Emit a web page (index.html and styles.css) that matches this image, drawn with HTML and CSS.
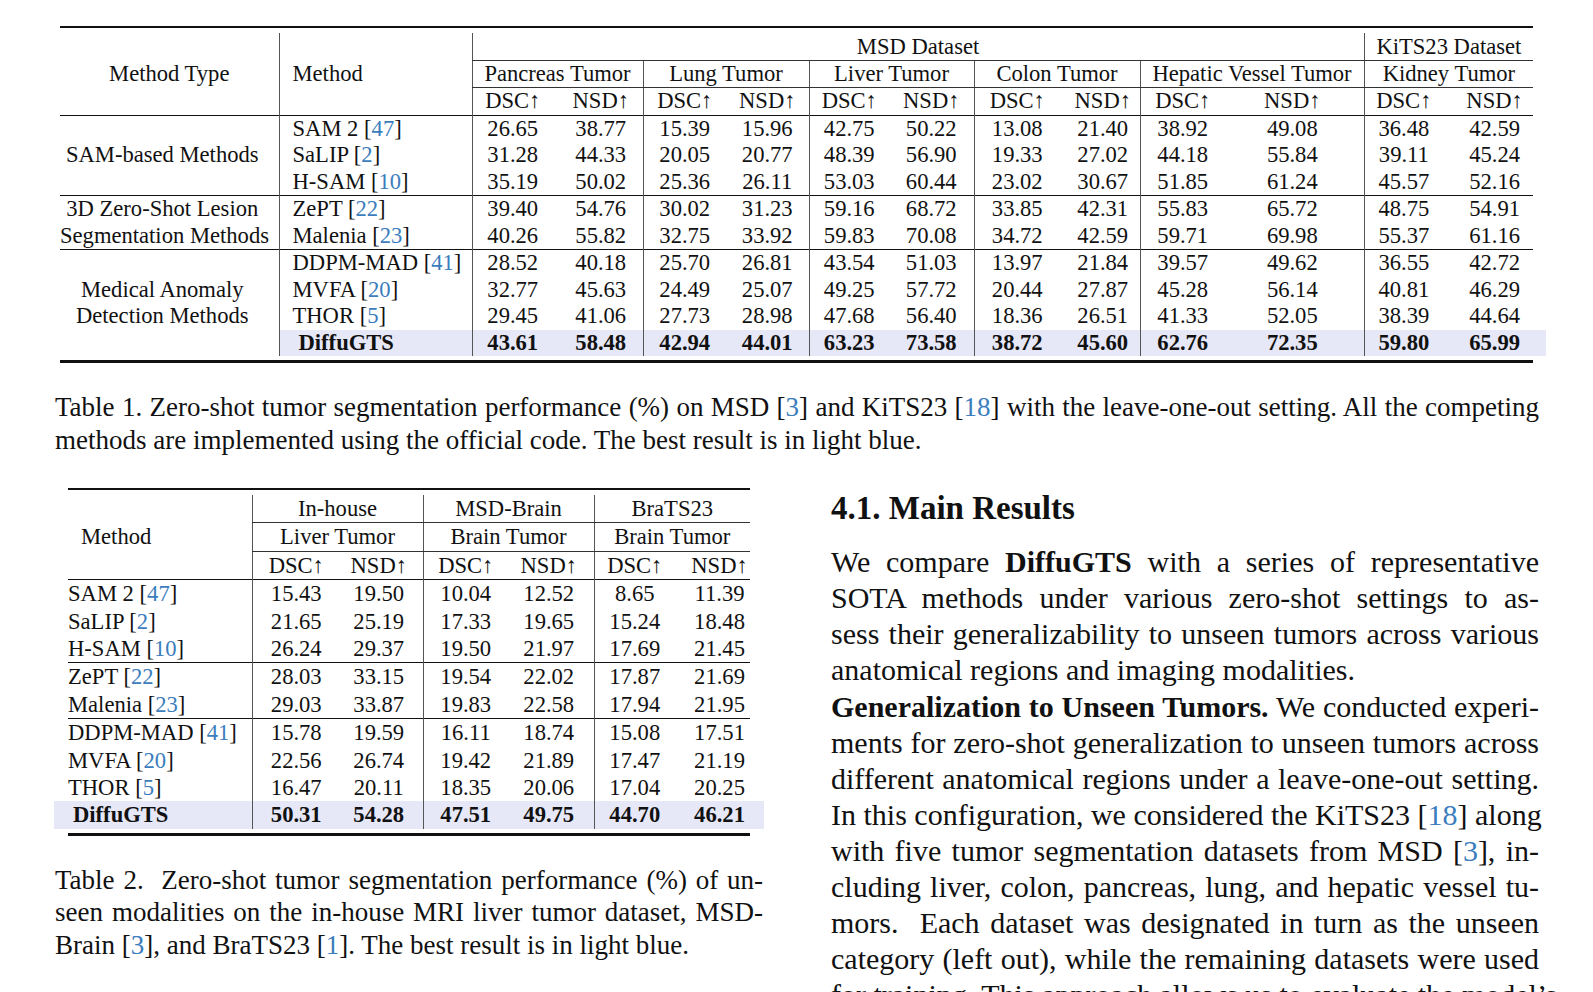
FILE: index.html
```html
<!DOCTYPE html>
<html>
<head>
<meta charset="utf-8">
<link rel="stylesheet" href="styles.css">
</head>
<body>
<div class="page">
  <div class="t1wrap">
    <table class="tab tab1">
      <colgroup>
        <col class="w219"><col class="w193">
        <col class="w81"><col class="w90">
        <col class="w83"><col class="w83">
        <col class="w80"><col class="w85">
        <col class="w86"><col class="w80">
        <col class="w85"><col class="w139">
        <col class="w79"><col class="w90">
      </colgroup>
      <thead>
        <tr class="top">
          <th rowspan="3" class="mth">Method Type</th>
          <th rowspan="3" class="meth vl">Method</th>
          <th colspan="10" class="vl cm">MSD Dataset</th>
          <th colspan="2" class="vl cm">KiTS23 Dataset</th>
        </tr>
        <tr>
          <th colspan="2" class="vl cm">Pancreas Tumor</th>
          <th colspan="2" class="vl cm">Lung Tumor</th>
          <th colspan="2" class="vl cm">Liver Tumor</th>
          <th colspan="2" class="vl cm">Colon Tumor</th>
          <th colspan="2" class="vl cm">Hepatic Vessel Tumor</th>
          <th colspan="2" class="vl cm">Kidney Tumor</th>
        </tr>
        <tr class="sub">
          <th>DSC↑</th><th>NSD↑</th><th>DSC↑</th><th>NSD↑</th><th>DSC↑</th><th>NSD↑</th>
          <th>DSC↑</th><th>NSD↑</th><th>DSC↑</th><th>NSD↑</th><th>DSC↑</th><th>NSD↑</th>
        </tr>
      </thead>
      <tbody>
        <tr class="gs">
          <td rowspan="3" class="mt">SAM-based Methods</td>
          <td class="meth">SAM 2 [<span class="ref">47</span>]</td>
          <td>26.65</td><td>38.77</td><td>15.39</td><td>15.96</td><td>42.75</td><td>50.22</td><td>13.08</td><td>21.40</td><td>38.92</td><td>49.08</td><td>36.48</td><td>42.59</td>
        </tr>
        <tr>
          <td class="meth">SaLIP [<span class="ref">2</span>]</td>
          <td>31.28</td><td>44.33</td><td>20.05</td><td>20.77</td><td>48.39</td><td>56.90</td><td>19.33</td><td>27.02</td><td>44.18</td><td>55.84</td><td>39.11</td><td>45.24</td>
        </tr>
        <tr>
          <td class="meth">H-SAM [<span class="ref">10</span>]</td>
          <td>35.19</td><td>50.02</td><td>25.36</td><td>26.11</td><td>53.03</td><td>60.44</td><td>23.02</td><td>30.67</td><td>51.85</td><td>61.24</td><td>45.57</td><td>52.16</td>
        </tr>
        <tr class="gs">
          <td rowspan="2" class="mt">3D Zero-Shot Lesion<br>Segmentation Methods</td>
          <td class="meth">ZePT [<span class="ref">22</span>]</td>
          <td>39.40</td><td>54.76</td><td>30.02</td><td>31.23</td><td>59.16</td><td>68.72</td><td>33.85</td><td>42.31</td><td>55.83</td><td>65.72</td><td>48.75</td><td>54.91</td>
        </tr>
        <tr>
          <td class="meth">Malenia [<span class="ref">23</span>]</td>
          <td>40.26</td><td>55.82</td><td>32.75</td><td>33.92</td><td>59.83</td><td>70.08</td><td>34.72</td><td>42.59</td><td>59.71</td><td>69.98</td><td>55.37</td><td>61.16</td>
        </tr>
        <tr class="gs">
          <td rowspan="4" class="mt">Medical Anomaly<br>Detection Methods</td>
          <td class="meth">DDPM-MAD [<span class="ref">41</span>]</td>
          <td>28.52</td><td>40.18</td><td>25.70</td><td>26.81</td><td>43.54</td><td>51.03</td><td>13.97</td><td>21.84</td><td>39.57</td><td>49.62</td><td>36.55</td><td>42.72</td>
        </tr>
        <tr>
          <td class="meth">MVFA [<span class="ref">20</span>]</td>
          <td>32.77</td><td>45.63</td><td>24.49</td><td>25.07</td><td>49.25</td><td>57.72</td><td>20.44</td><td>27.87</td><td>45.28</td><td>56.14</td><td>40.81</td><td>46.29</td>
        </tr>
        <tr>
          <td class="meth">THOR [<span class="ref">5</span>]</td>
          <td>29.45</td><td>41.06</td><td>27.73</td><td>28.98</td><td>47.68</td><td>56.40</td><td>18.36</td><td>26.51</td><td>41.33</td><td>52.05</td><td>38.39</td><td>44.64</td>
        </tr>
        <tr class="best">
          <td class="meth"><span class="bm">DiffuGTS</span></td>
          <td>43.61</td><td>58.48</td><td>42.94</td><td>44.01</td><td>63.23</td><td>73.58</td><td>38.72</td><td>45.60</td><td>62.76</td><td>72.35</td><td>59.80</td><td>65.99</td>
        </tr>
      </tbody>
    </table>
  </div>

  <p class="cap cap1">
    <span class="ln">Table 1. Zero-shot tumor segmentation performance (%) on MSD [<span class="ref">3</span>] and KiTS23 [<span class="ref">18</span>] with the leave-one-out setting. All the competing</span>
    <span class="ln last">methods are implemented using the official code. The best result is in light blue.</span>
  </p>

  <div class="cols">
    <div class="col left">
      <div class="t2wrap">
        <table class="tab tab2">
          <colgroup>
            <col class="w184"><col class="w88"><col class="w83"><col class="w85"><col class="w86"><col class="w81"><col class="w75">
          </colgroup>
          <thead>
            <tr>
              <th rowspan="3" class="mh2">Method</th>
              <th colspan="2" class="vl cm">In-house</th>
              <th colspan="2" class="vl cm">MSD-Brain</th>
              <th colspan="2" class="vl cm">BraTS23</th>
            </tr>
            <tr>
              <th colspan="2" class="vl cm">Liver Tumor</th>
              <th colspan="2" class="vl cm">Brain Tumor</th>
              <th colspan="2" class="vl cm">Brain Tumor</th>
            </tr>
            <tr class="sub">
              <th>DSC↑</th><th>NSD↑</th><th>DSC↑</th><th>NSD↑</th><th>DSC↑</th><th>NSD↑</th>
            </tr>
          </thead>
          <tbody>
            <tr class="gs"><td class="m2">SAM 2 [<span class="ref">47</span>]</td><td>15.43</td><td>19.50</td><td>10.04</td><td>12.52</td><td>8.65</td><td>11.39</td></tr>
            <tr><td class="m2">SaLIP [<span class="ref">2</span>]</td><td>21.65</td><td>25.19</td><td>17.33</td><td>19.65</td><td>15.24</td><td>18.48</td></tr>
            <tr><td class="m2">H-SAM [<span class="ref">10</span>]</td><td>26.24</td><td>29.37</td><td>19.50</td><td>21.97</td><td>17.69</td><td>21.45</td></tr>
            <tr class="gs"><td class="m2">ZePT [<span class="ref">22</span>]</td><td>28.03</td><td>33.15</td><td>19.54</td><td>22.02</td><td>17.87</td><td>21.69</td></tr>
            <tr><td class="m2">Malenia [<span class="ref">23</span>]</td><td>29.03</td><td>33.87</td><td>19.83</td><td>22.58</td><td>17.94</td><td>21.95</td></tr>
            <tr class="gs"><td class="m2">DDPM-MAD [<span class="ref">41</span>]</td><td>15.78</td><td>19.59</td><td>16.11</td><td>18.74</td><td>15.08</td><td>17.51</td></tr>
            <tr><td class="m2">MVFA [<span class="ref">20</span>]</td><td>22.56</td><td>26.74</td><td>19.42</td><td>21.89</td><td>17.47</td><td>21.19</td></tr>
            <tr><td class="m2">THOR [<span class="ref">5</span>]</td><td>16.47</td><td>20.11</td><td>18.35</td><td>20.06</td><td>17.04</td><td>20.25</td></tr>
            <tr class="best"><td class="m2"><span class="bm">DiffuGTS</span></td><td>50.31</td><td>54.28</td><td>47.51</td><td>49.75</td><td>44.70</td><td>46.21</td></tr>
          </tbody>
        </table>
      </div>
      <p class="cap cap2">
        <span class="ln">Table 2.&nbsp; Zero-shot tumor segmentation performance (%) of un-</span>
        <span class="ln">seen modalities on the in-house MRI liver tumor dataset, MSD-</span>
        <span class="ln last">Brain [<span class="ref">3</span>], and BraTS23 [<span class="ref">1</span>]. The best result is in light blue.</span>
      </p>
    </div>

    <div class="col right">
      <h3 class="sec">4.1. Main Results</h3>
      <p class="body">
        <span class="ln">We compare <b>DiffuGTS</b> with a series of representative</span>
        <span class="ln">SOTA methods under various zero-shot settings to as-</span>
        <span class="ln">sess their generalizability to unseen tumors across various</span>
        <span class="ln last">anatomical regions and imaging modalities.</span>
      </p>
      <p class="body p2">
        <span class="ln"><b>Generalization to Unseen Tumors.</b> We conducted experi-</span>
        <span class="ln">ments for zero-shot generalization to unseen tumors across</span>
        <span class="ln">different anatomical regions under a leave-one-out setting.</span>
        <span class="ln">In this configuration, we considered the KiTS23 [<span class="ref">18</span>] along</span>
        <span class="ln">with five tumor segmentation datasets from MSD [<span class="ref">3</span>], in-</span>
        <span class="ln">cluding liver, colon, pancreas, lung, and hepatic vessel tu-</span>
        <span class="ln">mors.&nbsp; Each dataset was designated in turn as the unseen</span>
        <span class="ln">category (left out), while the remaining datasets were used</span>
        <span class="ln">for training. This approach allows us to evaluate the model’s</span>
      </p>
    </div>
  </div>
</div>
</body>
</html>
```

FILE: styles.css
```css
* { box-sizing: border-box; }
html, body { margin: 0; padding: 0; background: #fff; }
body {
  font-family: "Liberation Serif", "Times New Roman", serif;
  color: #111;
  overflow: hidden;
}
.page {
  width: 1593px;
  height: 992px;
  padding: 26px 0 0 55px;
  overflow: hidden;
}

/* ---------- tables ---------- */
table.tab {
  border-collapse: collapse;
  table-layout: fixed;
  font-size: 22.6px;
}
.tab th, .tab td {
  padding: 0;
  font-weight: normal;
  text-align: center;
  white-space: nowrap;
  vertical-align: middle;
}
.ref { color: #3b7dbd; }
.bm { font-weight: bold; }
.best td { font-weight: bold; background: #e6e8f8; }
.vl { border-left: 1px solid #555; }
.cm { border-bottom: 1px solid #333; }
.tab tbody tr.gs td { border-top: 1px solid #111; }

/* table 1 */
.t1wrap {
  width: 1473px;
  margin-left: 5px;
  border-top: 2px solid #111;
  border-bottom: 3px solid #111;
  padding: 5px 0 4px;
}
.tab1 { width: 1473px; }
.tab1 th, .tab1 td { line-height: 26.5px; }
.tab1 tr.top th { padding-top: 2px; line-height: 24.5px; }
.w219 { width: 219px; } .w193 { width: 193px; }
.w81 { width: 81px; } .w90 { width: 90px; } .w83 { width: 83px; }
.w80 { width: 80px; } .w85 { width: 85px; } .w86 { width: 86px; }
.w139 { width: 139px; } .w79 { width: 79px; }
.w184 { width: 184px; } .w88 { width: 88px; } .w75 { width: 75px; }

.tab1 tr.top th.mth { text-align: center; padding-top: 0; }
.tab1 tr.top th.meth { padding-top: 0; }
.tab1 .mt { text-align: center; padding-right: 14px; }
.tab1 .meth { text-align: left; padding-left: 13px; border-left: 1px solid #555; }
.tab1 .best .meth { padding-left: 19px; }
.tab1 td:nth-last-child(even):nth-last-child(-n+12),
.tab1 .sub th:nth-last-child(even) { border-left: 1px solid #555; }
.tab1 td:nth-last-child(11), .tab1 .sub th:nth-last-child(11),
.tab1 td:nth-last-child(5), .tab1 .sub th:nth-last-child(5) { padding-left: 6px; }
.tab1 td:nth-last-child(3), .tab1 .sub th:nth-last-child(3) { padding-right: 4px; }
.tab1 td:last-child, .tab1 .sub th:last-child { padding-left: 13px; }
.tab1 .best td:last-child { box-shadow: 13px 0 0 #e6e8f8; }

/* captions */
.cap {
  margin: 0;
  font-size: 27px;
  line-height: 32.5px;
  text-align: justify;
}
.ln { display: block; text-align: justify; text-align-last: justify; white-space: nowrap; }
.ln.last { text-align-last: left; }
.cap1 { margin-top: 28px; width: 1484px; }

/* two columns */
.cols {
  display: flex;
  gap: 68px;
  margin-top: 32px;
}
.col { width: 708px; flex: none; }

/* table 2 */
.t2wrap {
  width: 682px;
  margin-left: 13px;
  border-top: 2px solid #111;
  border-bottom: 3px solid #111;
  padding: 5px 0 4px;
}
.tab2 { width: 682px; }
.tab2 th, .tab2 td { line-height: 27.4px; }
.tab2 .mh2 { text-align: left; padding-left: 13px; }
.tab2 .m2 { text-align: left; }
.tab2 .best .m2 { padding-left: 5px; }
.tab2 td:nth-last-child(even):nth-last-child(-n+6),
.tab2 .sub th:nth-last-child(even) { border-left: 1px solid #555; }
.tab2 td:nth-last-child(5), .tab2 .sub th:nth-last-child(5) { padding-right: 5px; }
.tab2 td:nth-last-child(3), .tab2 .sub th:nth-last-child(3) { padding-right: 4px; }
.tab2 td:last-child, .tab2 .sub th:last-child { padding-left: 14px; }
.tab2 .best td:first-child { box-shadow: -14px 0 0 #e6e8f8; }
.tab2 .best td:last-child { box-shadow: 14px 0 0 #e6e8f8; }

.cap2 { margin-top: 28px; width: 708px; }

/* right column text */
.sec {
  margin: 0 0 15.5px;
  font-size: 33px;
  line-height: 40px;
  font-weight: bold;
}
.body {
  margin: 0;
  font-size: 30px;
  line-height: 36px;
  width: 708px;
}
.body.p2 { margin-top: 1.5px; }
```
